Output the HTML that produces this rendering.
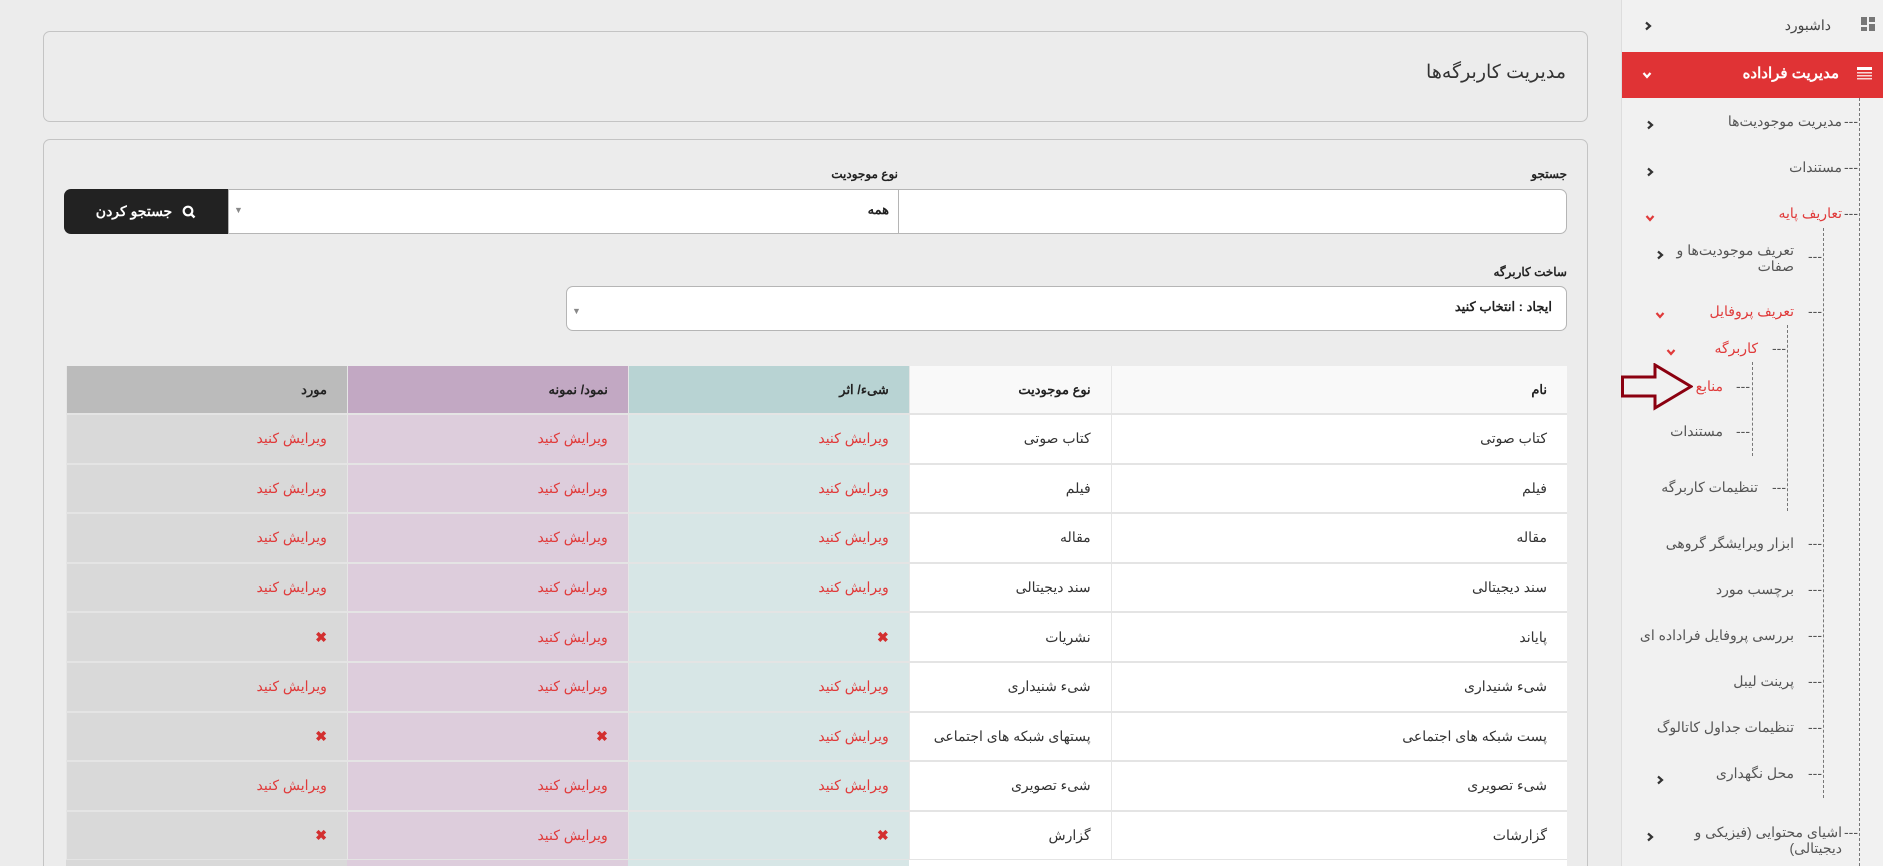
<!DOCTYPE html>
<html style="width:1883px;height:866px;overflow:hidden"><head><meta charset="utf-8"><style>
*{box-sizing:border-box;margin:0;padding:0}
body{width:1883px;height:866px;overflow:hidden;background:#ececec;font-family:"Liberation Sans","Noto Sans CJK SC",sans-serif;color:#333;position:relative}
.abs{position:absolute}
.panel{position:absolute;border:1px solid #c4c4c4;border-radius:7px}
.lbl{position:absolute;font-size:12px;font-weight:bold;color:#222;direction:rtl}
.inp{position:absolute;background:#fff;border:1px solid #b5b5b5}
table{position:absolute;left:66px;top:366px;width:1501px;border-collapse:collapse;direction:rtl;font-size:14px}
td,th{height:49.6px;padding:0 20px;text-align:right;border-bottom:2px solid #e4e4e4;border-left:1px solid #e6e6e6;font-weight:normal}
th{height:48px;font-weight:bold;font-size:13px;color:#222}
.c1{background:#fff;width:456px}.c2{background:#fff;width:202px}
.c3{background:#d7e6e6;width:281px}.c4{background:#ddcddc;width:281px}.c5{background:#d9d9d9;width:281px}
th.c1,th.c2{background:#f9f9f9}th.c3{background:#b8d3d3}th.c4{background:#c2a8c3}th.c5{background:#bbbbbb}
.e{color:#e03a3a}.x{color:#d32f2f;font-weight:bold}
#side{position:absolute;left:1621px;top:0;width:262px;height:866px;background:#f1f1f1;border-left:1px solid #ddd}
.it{position:absolute;direction:rtl;font-size:14px;color:#555;text-align:right;line-height:16px}
.red{color:#e03a3a}
.dash{position:absolute;border-left:1px dashed #777;width:0}
.chev{position:absolute;width:10px;height:10px}
</style></head><body>
<div class="panel" style="left:43px;top:31px;width:1545px;height:91px"></div>
<div class="abs" style="right:317px;top:61px;font-size:19px;color:#333;direction:rtl">مدیریت کاربرگه‌ها</div>
<div class="panel" style="left:43px;top:139px;width:1545px;height:740px;border-bottom:none;border-radius:7px 7px 0 0"></div>
<div class="lbl" style="right:316px;top:167px">جستجو</div>
<div class="lbl" style="right:985px;top:167px">نوع موجودیت</div>
<div class="inp" style="left:898px;top:189px;width:669px;height:45px;border-radius:0 7px 7px 0"></div>
<div class="inp" style="left:228px;top:189px;width:671px;height:45px"></div>
<div class="abs" style="right:994px;top:202px;font-size:13px;font-weight:bold;color:#222">همه</div>
<div class="abs" style="left:234px;top:205px;font-size:9px;color:#888">▼</div>
<div class="abs" style="left:64px;top:189px;width:164px;height:45px;background:#222;border-radius:7px 0 0 7px;color:#fff;font-size:14px;font-weight:bold;direction:rtl;display:flex;align-items:center;justify-content:center;gap:10px">
<svg width="14" height="14" viewBox="0 0 14 14"><circle cx="6" cy="6" r="4.3" fill="none" stroke="#fff" stroke-width="2.2"/><path d="M9 9l3.5 3.5" stroke="#fff" stroke-width="2.4"/></svg><span>جستجو کردن</span></div>
<div class="lbl" style="right:316px;top:265px">ساخت کاربرگه</div>
<div class="inp" style="left:566px;top:286px;width:1001px;height:45px;border-radius:7px"></div>
<div class="abs" style="right:331px;top:299px;font-size:13px;font-weight:bold;color:#222;direction:rtl">ایجاد : انتخاب کنید</div>
<div class="abs" style="left:572px;top:306px;font-size:9px;color:#888">▼</div>
<table>
<tr><th class="c1">نام</th><th class="c2">نوع موجودیت</th><th class="c3">شیء/ اثر</th><th class="c4">نمود/ نمونه</th><th class="c5">مورد</th></tr>
<tr><td class="c1">کتاب صوتی</td><td class="c2">کتاب صوتی</td><td class="c3 e">ویرایش کنید</td><td class="c4 e">ویرایش کنید</td><td class="c5 e">ویرایش کنید</td></tr>
<tr><td class="c1">فیلم</td><td class="c2">فیلم</td><td class="c3 e">ویرایش کنید</td><td class="c4 e">ویرایش کنید</td><td class="c5 e">ویرایش کنید</td></tr>
<tr><td class="c1">مقاله</td><td class="c2">مقاله</td><td class="c3 e">ویرایش کنید</td><td class="c4 e">ویرایش کنید</td><td class="c5 e">ویرایش کنید</td></tr>
<tr><td class="c1">سند دیجیتالی</td><td class="c2">سند دیجیتالی</td><td class="c3 e">ویرایش کنید</td><td class="c4 e">ویرایش کنید</td><td class="c5 e">ویرایش کنید</td></tr>
<tr><td class="c1">پایاند</td><td class="c2">نشریات</td><td class="c3 x">✖</td><td class="c4 e">ویرایش کنید</td><td class="c5 x">✖</td></tr>
<tr><td class="c1">شیء شنیداری</td><td class="c2">شیء شنیداری</td><td class="c3 e">ویرایش کنید</td><td class="c4 e">ویرایش کنید</td><td class="c5 e">ویرایش کنید</td></tr>
<tr><td class="c1">پست شبکه های اجتماعی</td><td class="c2">پستهای شبکه های اجتماعی</td><td class="c3 e">ویرایش کنید</td><td class="c4 x">✖</td><td class="c5 x">✖</td></tr>
<tr><td class="c1">شیء تصویری</td><td class="c2">شیء تصویری</td><td class="c3 e">ویرایش کنید</td><td class="c4 e">ویرایش کنید</td><td class="c5 e">ویرایش کنید</td></tr>
<tr><td class="c1">گزارشات</td><td class="c2">گزارش</td><td class="c3 x">✖</td><td class="c4 e">ویرایش کنید</td><td class="c5 x">✖</td></tr>
</table>
<div class="abs" style="left:66px;top:860px;width:1501px;height:6px;display:flex"><div style="width:281px;background:#d9d9d9"></div><div style="width:281px;background:#ddcddc"></div><div style="width:281px;background:#d7e6e6"></div><div style="flex:1;background:#fff"></div></div>
<div id="side"></div>
<div class="it" style="right:52px;top:17px;color:#444">داشبورد</div>
<svg class="abs" style="left:1861px;top:17px" width="14" height="14" viewBox="0 0 14 14"><rect x="0" y="0" width="6" height="8" fill="#777"/><rect x="8" y="0" width="6" height="5" fill="#777"/><rect x="0" y="10" width="6" height="4" fill="#777"/><rect x="8" y="7" width="6" height="7" fill="#777"/></svg>
<svg class="chev" style="left:1643px;top:21px" viewBox="0 0 10 10"><path d="M3 1.5l4 3.5-4 3.5" fill="none" stroke="#333" stroke-width="2.2"/></svg>
<div class="abs" style="left:1622px;top:52px;width:261px;height:46px;background:#e03335"></div>
<div class="it" style="right:44px;top:66px;color:#fff;font-weight:bold;font-size:15px">مدیریت فراداده</div>
<svg class="abs" style="left:1857px;top:67px" width="15" height="13" viewBox="0 0 15 13"><rect x="0" y="0" width="15" height="3" fill="#fff"/><rect x="0" y="5" width="15" height="1.5" fill="#fff" opacity=".8"/><rect x="0" y="8" width="15" height="1.5" fill="#fff" opacity=".8"/><rect x="0" y="11" width="15" height="1.5" fill="#fff" opacity=".8"/></svg>
<svg class="chev" style="left:1642px;top:70px" viewBox="0 0 10 10"><path d="M1.5 3l3.5 4 3.5-4" fill="none" stroke="#fff" stroke-width="2.2"/></svg>
<div class="dash" style="left:1859px;top:98px;height:768px"></div>
<div class="dash" style="left:1823px;top:228px;height:570px"></div>
<div class="dash" style="left:1787px;top:325px;height:186px"></div>
<div class="dash" style="left:1752px;top:362px;height:94px"></div>
<div class="it" style="right:25px;top:113px">---</div><div class="it" style="right:41px;top:113px">مدیریت موجودیت‌ها</div>
<svg class="chev" style="left:1645px;top:120px" viewBox="0 0 10 10"><path d="M3 1.5l4 3.5-4 3.5" fill="none" stroke="#333" stroke-width="2.2"/></svg>
<div class="it" style="right:25px;top:159px">---</div><div class="it" style="right:41px;top:159px">مستندات</div>
<svg class="chev" style="left:1645px;top:167px" viewBox="0 0 10 10"><path d="M3 1.5l4 3.5-4 3.5" fill="none" stroke="#333" stroke-width="2.2"/></svg>
<div class="it" style="right:25px;top:205px">---</div><div class="it red" style="right:41px;top:205px">تعاریف پایه</div>
<svg class="chev" style="left:1645px;top:213px" viewBox="0 0 10 10"><path d="M1.5 3l3.5 4 3.5-4" fill="none" stroke="#e03a3a" stroke-width="2.2"/></svg>
<div class="it" style="right:61px;top:248px">---</div><div class="it" style="right:89px;top:242px;width:140px">تعریف موجودیت‌ها و صفات</div>
<svg class="chev" style="left:1655px;top:250px" viewBox="0 0 10 10"><path d="M3 1.5l4 3.5-4 3.5" fill="none" stroke="#333" stroke-width="2.2"/></svg>
<div class="it" style="right:61px;top:303px">---</div><div class="it red" style="right:89px;top:303px">تعریف پروفایل</div>
<svg class="chev" style="left:1655px;top:310px" viewBox="0 0 10 10"><path d="M1.5 3l3.5 4 3.5-4" fill="none" stroke="#e03a3a" stroke-width="2.2"/></svg>
<div class="it" style="right:97px;top:340px">---</div><div class="it red" style="right:125px;top:340px">کاربرگه</div>
<svg class="chev" style="left:1666px;top:347px" viewBox="0 0 10 10"><path d="M1.5 3l3.5 4 3.5-4" fill="none" stroke="#e03a3a" stroke-width="2.2"/></svg>
<div class="it" style="right:133px;top:378px">---</div><div class="it red" style="right:160px;top:378px">منابع</div>
<div class="it" style="right:133px;top:423px">---</div><div class="it" style="right:160px;top:423px">مستندات</div>
<div class="it" style="right:97px;top:479px">---</div><div class="it" style="right:125px;top:479px">تنظیمات کاربرگه</div>
<div class="it" style="right:61px;top:535px">---</div><div class="it" style="right:89px;top:535px">ابزار ویرایشگر گروهی</div>
<div class="it" style="right:61px;top:581px">---</div><div class="it" style="right:89px;top:581px">برچسب مورد</div>
<div class="it" style="right:61px;top:627px">---</div><div class="it" style="right:89px;top:627px">بررسی پروفایل فراداده ای</div>
<div class="it" style="right:61px;top:673px">---</div><div class="it" style="right:89px;top:673px">پرینت لیبل</div>
<div class="it" style="right:61px;top:719px">---</div><div class="it" style="right:89px;top:719px">تنظیمات جداول کاتالوگ</div>
<div class="it" style="right:61px;top:765px">---</div><div class="it" style="right:89px;top:765px">محل نگهداری</div>
<svg class="chev" style="left:1655px;top:775px" viewBox="0 0 10 10"><path d="M3 1.5l4 3.5-4 3.5" fill="none" stroke="#333" stroke-width="2.2"/></svg>
<div class="it" style="right:25px;top:824px">---</div><div class="it" style="right:41px;top:824px;width:150px">اشیای محتوایی (فیزیکی و دیجیتالی)</div>
<svg class="chev" style="left:1645px;top:832px" viewBox="0 0 10 10"><path d="M3 1.5l4 3.5-4 3.5" fill="none" stroke="#333" stroke-width="2.2"/></svg>
<svg class="abs" style="left:1621px;top:363px" width="72" height="48" viewBox="0 0 72 48"><path d="M1.5 14H34V2L70 23.5 34 45V33H1.5Z" fill="none" stroke="#8b0010" stroke-width="3"/></svg>
</body></html>
